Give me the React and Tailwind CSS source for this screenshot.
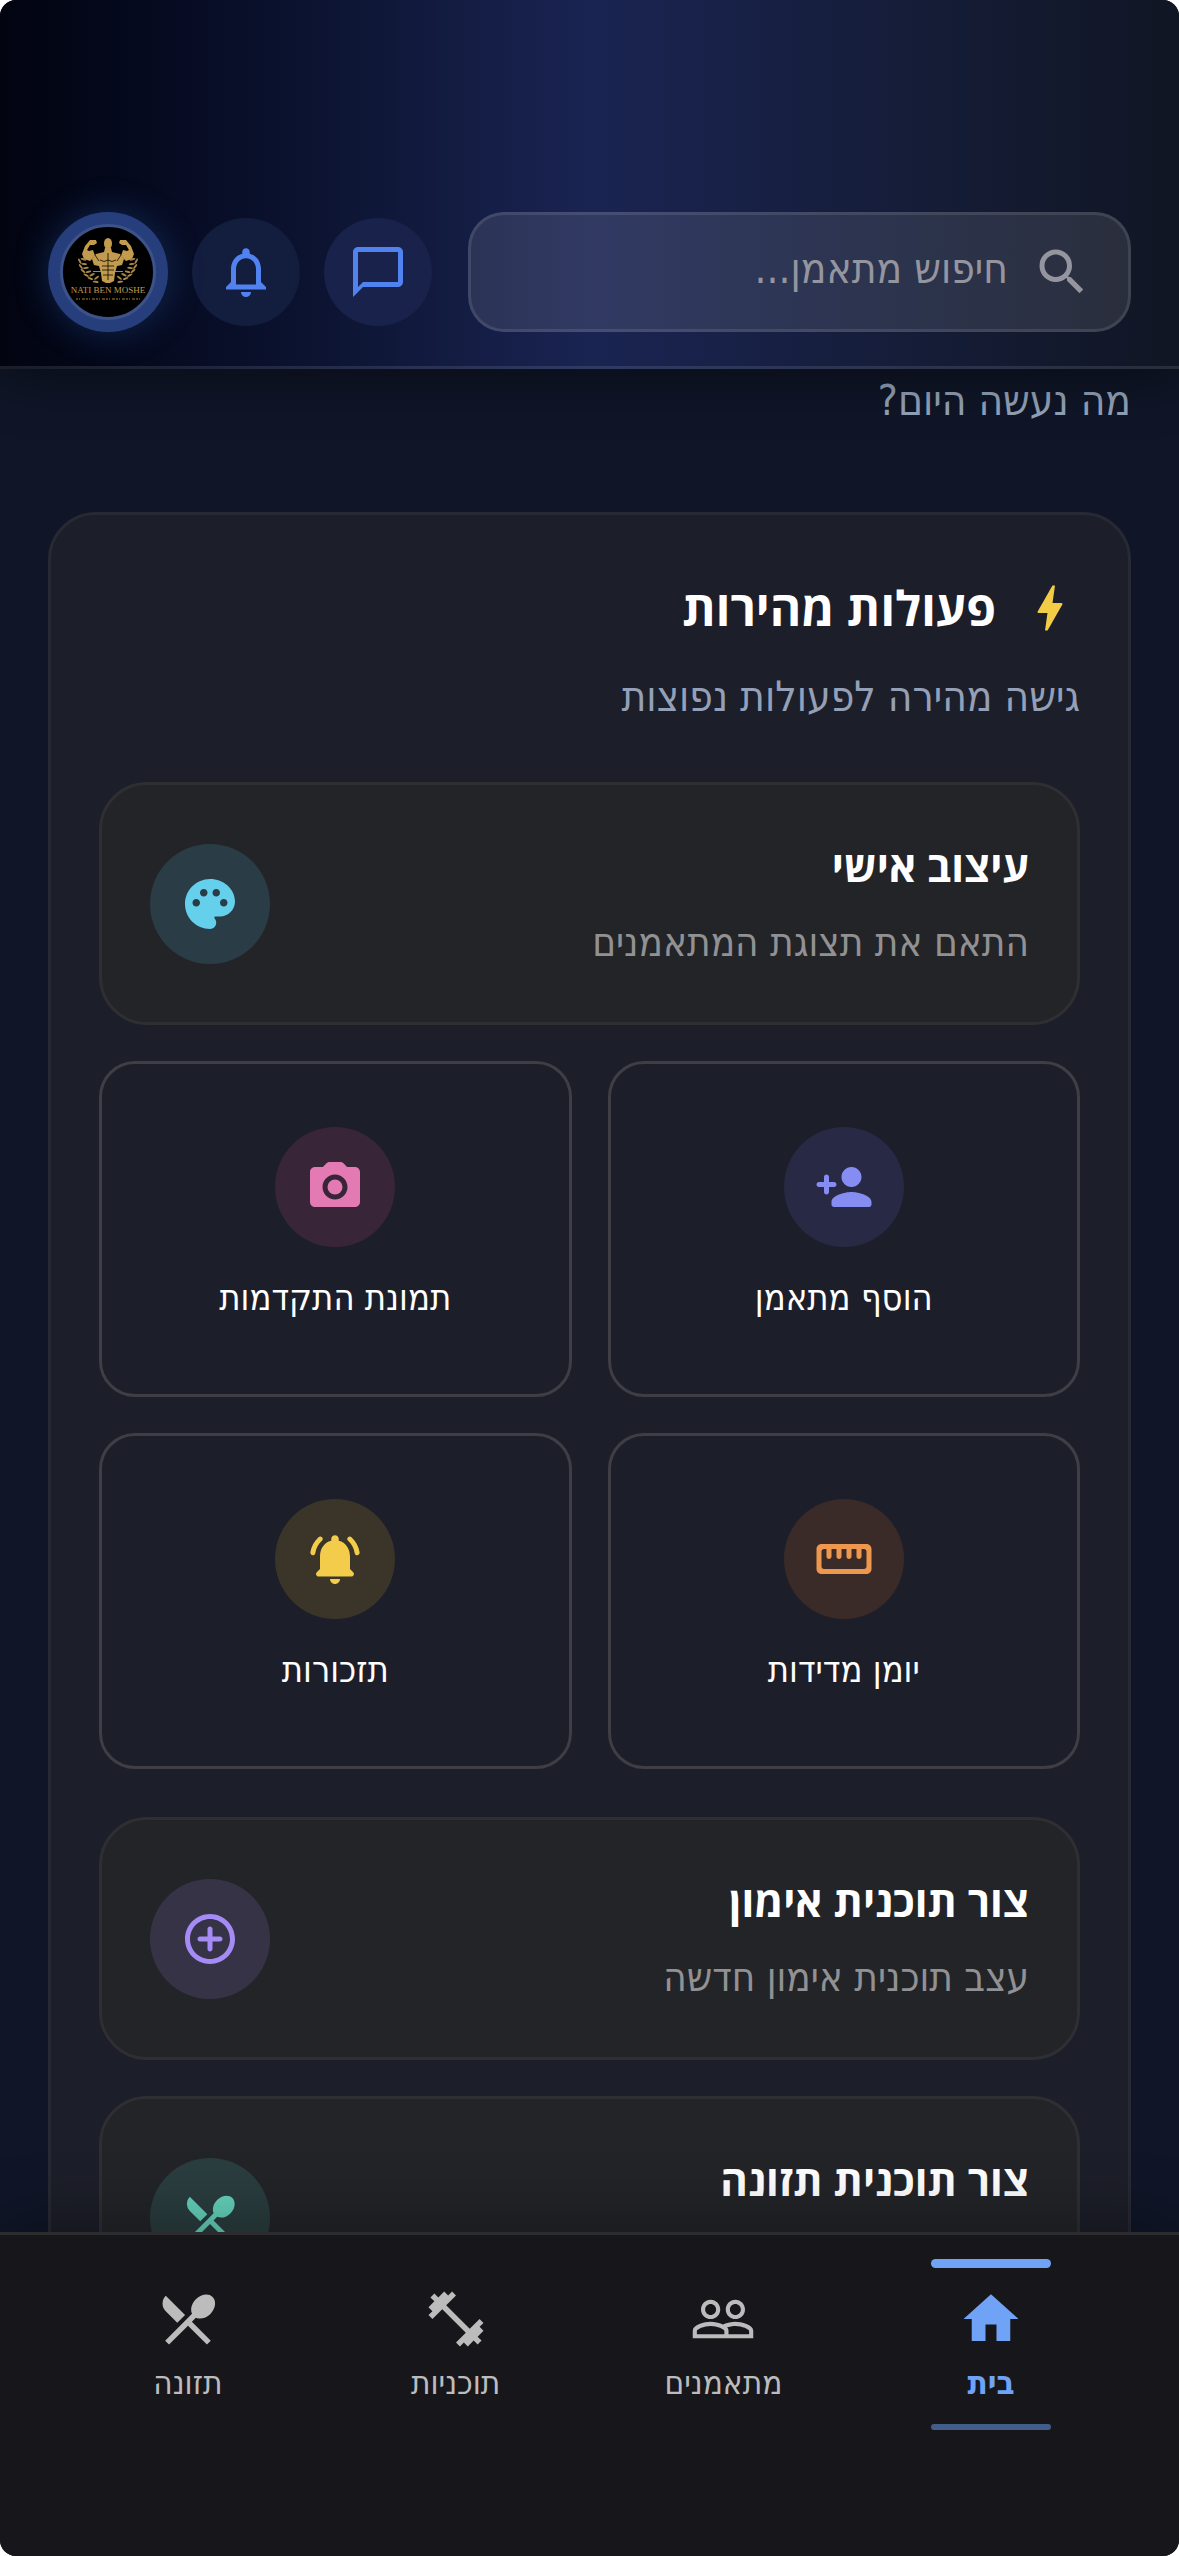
// src/App.jsx
// Trainer dashboard: search header, quick actions panel, bottom navigation

import {
  MdBolt,
  MdChatBubbleOutline,
  MdFitnessCenter,
  MdHome,
  MdNotificationsNone,
  MdPalette,
  MdPeopleOutline,
  MdRestaurantMenu,
  MdSearch,
} from 'react-icons/md';

// Rounded variants that react-icons does not ship
function RoundedIcon({ className, children }) {
  return (
    <svg viewBox="0 0 24 24" fill="currentColor" className={className} aria-hidden="true">
      {children}
    </svg>
  );
}

function PersonAddIcon({ className }) {
  return (
    <RoundedIcon className={className}>
      <path d="M15 12c2.21 0 4-1.79 4-4s-1.79-4-4-4-4 1.79-4 4 1.79 4 4 4zm-9-2V8c0-.55-.45-1-1-1s-1 .45-1 1v2H2c-.55 0-1 .45-1 1s.45 1 1 1h2v2c0 .55.45 1 1 1s1-.45 1-1v-2h2c.55 0 1-.45 1-1s-.45-1-1-1H6zm9 4c-2.67 0-8 1.34-8 4v1c0 .55.45 1 1 1h14c.55 0 1-.45 1-1v-1c0-2.66-5.33-4-8-4z" />
    </RoundedIcon>
  );
}

function CameraIcon({ className }) {
  return (
    <RoundedIcon className={className}>
      <circle cx="12" cy="12" r="3" />
      <path d="M20 4h-3.17l-1.24-1.35c-.37-.41-.91-.65-1.47-.65H9.88c-.56 0-1.1.24-1.48.65L7.17 4H4c-1.1 0-2 .9-2 2v12c0 1.1.9 2 2 2h16c1.1 0 2-.9 2-2V6c0-1.1-.9-2-2-2zm-8 13c-2.76 0-5-2.24-5-5s2.24-5 5-5 5 2.24 5 5-2.24 5-5 5z" />
    </RoundedIcon>
  );
}

function RulerIcon({ className }) {
  return (
    <RoundedIcon className={className}>
      <path d="M21 6H3c-1.1 0-2 .9-2 2v8c0 1.1.9 2 2 2h18c1.1 0 2-.9 2-2V8c0-1.1-.9-2-2-2zm-1 10H4c-.55 0-1-.45-1-1V9c0-.55.45-1 1-1h1v3c0 .55.45 1 1 1s1-.45 1-1V8h2v3c0 .55.45 1 1 1s1-.45 1-1V8h2v3c0 .55.45 1 1 1s1-.45 1-1V8h2v3c0 .55.45 1 1 1s1-.45 1-1V8h1c.55 0 1 .45 1 1v6c0 .55-.45 1-1 1z" />
    </RoundedIcon>
  );
}

function BellRingIcon({ className }) {
  return (
    <RoundedIcon className={className}>
      <path d="M12 22c1.1 0 2-.9 2-2h-4c0 1.1.9 2 2 2zm6-6v-5c0-3.07-1.63-5.64-4.5-6.32V4c0-.83-.67-1.5-1.5-1.5s-1.5.67-1.5 1.5v.68C7.64 5.36 6 7.92 6 11v5l-1.29 1.29c-.63.63-.19 1.71.7 1.71h13.17c.89 0 1.34-1.08.71-1.71L18 16zM6.77 4.73c.42-.38.43-1.03.03-1.43-.38-.38-1-.39-1.39-.02C3.7 4.84 2.52 6.96 2.14 9.34c-.09.61.38 1.16 1 1.16.48 0 .9-.35.98-.83.3-1.94 1.26-3.67 2.65-4.94zM18.6 3.28c-.4-.37-1.02-.36-1.4.02-.4.4-.38 1.04.03 1.42 1.38 1.27 2.35 3 2.65 4.94.07.48.49.83.98.83.61 0 1.09-.55.99-1.16-.38-2.37-1.55-4.48-3.25-6.05z" />
    </RoundedIcon>
  );
}

function AddCircleIcon({ className }) {
  return (
    <RoundedIcon className={className}>
      <path d="M12 7c-.55 0-1 .45-1 1v3H8c-.55 0-1 .45-1 1s.45 1 1 1h3v3c0 .55.45 1 1 1s1-.45 1-1v-3h3c.55 0 1-.45 1-1s-.45-1-1-1h-3V8c0-.55-.45-1-1-1zm0-5C6.48 2 2 6.48 2 12s4.48 10 10 10 10-4.48 10-10S17.52 2 12 2zm0 18c-4.41 0-8-3.59-8-8s3.59-8 8-8 8 3.59 8 8-3.59 8-8 8z" />
    </RoundedIcon>
  );
}

// Gold bodybuilder between two laurel branches, brand name underneath
function BrandLogo() {
  const leaves = [
    [19, 34, 60],
    [20, 39, 50],
    [22, 43, 40],
    [25, 47, 30],
    [29, 50, 20],
    [34, 53, 8],
  ];

  return (
    <svg viewBox="0 0 90 90" className="size-full" role="img" aria-label="Nati Ben Moshe">
      <g fill="#c39b4e">
        <ellipse cx="45" cy="16.5" rx="4" ry="5.5" />
        <path d="M42 21h6l1 4 8 2 4 5-2 6-5 1-2 7-1 8-4 2h-4l-4-2-1-8-2-7-5-1-2-6 4-5 8-2z" />
        <path d="M32 29l-5 5-6-2-2-5 3-8 5-6 6 0 1 3-3 2-4 0-3 5 2 1 4-1z" />
        <path d="M58 29l5 5 6-2 2-5-3-8-5-6-6 0-1 3 3 2 4 0 3 5-2 1-4-1z" />
      </g>
      <g stroke="#0a0703" strokeWidth="0.8" fill="none">
        <path d="M45 26v27M37 33q4 3 8 0q4 3 8 0M39 39h12M39 43h12M40 48h10M32 28l4 6M58 28l-4 6" />
      </g>
      <g fill="#a88747">
        {[0, 1].map((side) => (
          <g key={side} transform={side ? 'translate(90 0) scale(-1 1)' : undefined}>
            {leaves.map(([x, y, angle]) => (
              <g key={x} transform={`translate(${x} ${y}) rotate(${angle})`}>
                <ellipse cx="-1" cy="2" rx="3" ry="1" />
                <ellipse cx="1" cy="-2" rx="3" ry="1" transform="rotate(-45)" />
              </g>
            ))}
          </g>
        ))}
        <path d="M30 44h8v1h-8zM52 44h8v1h-8z" />
      </g>
      <text
        x="45"
        y="66"
        textAnchor="middle"
        fontSize="9"
        fill="#c39b4e"
        fontFamily="Liberation Serif, serif"
      >
        NATI BEN MOSHE
      </text>
      <path d="M13 72h64" stroke="#6d5729" strokeWidth="1.4" strokeDasharray="2 1 1 2 3 1" />
    </svg>
  );
}

const TILES = [
  { label: 'הוסף מתאמן', Icon: PersonAddIcon, tone: 'bg-[#282944] text-[#868df2]' },
  { label: 'תמונת התקדמות', Icon: CameraIcon, tone: 'bg-[#382638] text-[#e37ab4]' },
  { label: 'יומן מדידות', Icon: RulerIcon, tone: 'bg-[#3a2b29] text-[#ee974f]' },
  { label: 'תזכורות', Icon: BellRingIcon, tone: 'bg-[#3a3528] text-[#f2cc4a]' },
];

const NAV_ITEMS = [
  { label: 'בית', Icon: MdHome, active: true },
  { label: 'מתאמנים', Icon: MdPeopleOutline },
  { label: 'תוכניות', Icon: MdFitnessCenter },
  { label: 'תזונה', Icon: MdRestaurantMenu },
];

function ActionCard({ title, text, Icon, tone }) {
  return (
    <button
      type="button"
      className="flex w-full items-center justify-between rounded-[48px] border-3 border-[#2e2e33] bg-[#232428] p-12 text-right"
    >
      <span className="flex flex-col gap-3">
        <span className="font-['Open_Sans',sans-serif] text-[42px] leading-[66px] font-bold text-white">
          {title}
        </span>
        <span className="min-h-[63px] text-[40px] leading-[63px] text-[#919194]">{text}</span>
      </span>
      <span className={`flex size-[120px] shrink-0 items-center justify-center rounded-full ${tone}`}>
        <Icon className="size-[60px]" />
      </span>
    </button>
  );
}

function ActionTile({ label, Icon, tone }) {
  return (
    <button
      type="button"
      className="flex h-[336px] flex-col items-center justify-center gap-6 rounded-[36px] border-3 border-[#3e3e44] pb-1.5"
    >
      <span className={`flex size-[120px] items-center justify-center rounded-full ${tone}`}>
        <Icon className="size-[60px]" />
      </span>
      <span className="text-[36px] leading-[54px] text-white">{label}</span>
    </button>
  );
}

function Header() {
  return (
    <header className="relative z-10 flex items-center gap-9 border-b-3 border-white/10 bg-linear-to-l from-[#111624] via-[#1a2452] to-[#020410] bg-origin-border px-12 pt-[212px] pb-[34px] shadow-[0_12px_48px_rgba(0,0,0,0.4)]">
      <label className="flex h-[120px] min-w-0 flex-1 items-center gap-6 rounded-[36px] border-3 border-white/10 bg-white/10 px-9 text-[#94959f]">
        <MdSearch className="size-[60px] shrink-0" />
        <input
          type="search"
          aria-label="חיפוש מתאמן"
          placeholder="חיפוש מתאמן..."
          className="w-full min-w-0 bg-transparent pb-1.5 text-[42px] leading-[60px] outline-none placeholder:text-[#94959f]"
        />
      </label>
      <div className="flex items-center gap-6">
        <button
          type="button"
          aria-label="הודעות"
          className="flex size-[108px] items-center justify-center rounded-full bg-[#18224b] text-[#5083f0]"
        >
          <MdChatBubbleOutline className="size-[60px]" />
        </button>
        <button
          type="button"
          aria-label="התראות"
          className="flex size-[108px] items-center justify-center rounded-full bg-[#131d3e] text-[#5083f0]"
        >
          <MdNotificationsNone className="size-[60px]" />
        </button>
        <button
          type="button"
          aria-label="פרופיל"
          className="flex size-[120px] items-center justify-center rounded-full bg-[#263f7c] shadow-[0_0_36px_rgba(59,130,246,0.25)]"
        >
          <span className="size-24 overflow-hidden rounded-full border-3 border-[#3c5288] bg-black">
            <BrandLogo />
          </span>
        </button>
      </div>
    </header>
  );
}

function BottomNav() {
  return (
    <nav className="relative z-10 flex h-[324px] items-start border-t-3 border-[#2c2c2e] bg-[#17171b] px-[54px] pt-6 shadow-[0_-12px_60px_rgba(0,0,0,0.3)]">
      {NAV_ITEMS.map(({ label, Icon, active }) => (
        <a
          key={label}
          href="#"
          aria-current={active ? 'page' : undefined}
          className={`flex flex-1 flex-col items-center ${active ? 'font-bold text-[#70a3f6]' : 'text-[#bcbcbd]'}`}
        >
          <span className={`h-[9px] w-[120px] rounded-full ${active ? 'bg-[#70a3f6]' : ''}`} />
          <Icon className="mt-[18px] size-[66px]" />
          <span className="mt-1 text-[33px] leading-[54px]">{label}</span>
          <span className={`mt-[14px] h-[6px] w-[120px] rounded-full ${active ? 'bg-[#435d8b]' : ''}`} />
        </a>
      ))}
    </nav>
  );
}

export default function App() {
  return (
    <div className="bg-white">
      <div
        dir="rtl"
        className="flex h-screen flex-col overflow-hidden rounded-2xl bg-[#101628] font-['DejaVu_Sans_Condensed','Open_Sans',sans-serif]"
      >
        <Header />

        <main className="min-h-0 flex-1 overflow-hidden px-12">
          <p className="text-[42px] leading-[63px] text-[#94a3b8]">מה נעשה היום?</p>

          <section className="mt-20 rounded-[48px] border-3 border-[#272933] bg-[#1c1e29] p-12">
            <h2 className="flex items-center gap-6 font-['Open_Sans',sans-serif] text-[48px] leading-[90px] font-bold text-white">
              <MdBolt className="size-[60px] text-[#f2cc47]" />
              פעולות מהירות
            </h2>
            <p className="mt-3 text-[42px] leading-[63px] text-[#94a0b8]">גישה מהירה לפעולות נפוצות</p>

            <div className="mt-[54px]">
              <ActionCard
                title="עיצוב אישי"
                text="התאם את תצוגת המתאמנים"
                Icon={MdPalette}
                tone="bg-[#2a3c45] text-[#64d0ec]"
              />
            </div>

            <div className="mt-9 grid grid-cols-2 gap-9">
              {TILES.map((tile) => (
                <ActionTile key={tile.label} {...tile} />
              ))}
            </div>

            <div className="mt-12 flex flex-col gap-9">
              <ActionCard
                title="צור תוכנית אימון"
                text="עצב תוכנית אימון חדשה"
                Icon={AddCircleIcon}
                tone="bg-[#363347] text-[#a48bf5]"
              />
              <ActionCard title="צור תוכנית תזונה" Icon={MdRestaurantMenu} tone="bg-[#2a3d3f] text-[#65d2bb]" />
            </div>
          </section>
        </main>

        <BottomNav />
      </div>
    </div>
  );
}
